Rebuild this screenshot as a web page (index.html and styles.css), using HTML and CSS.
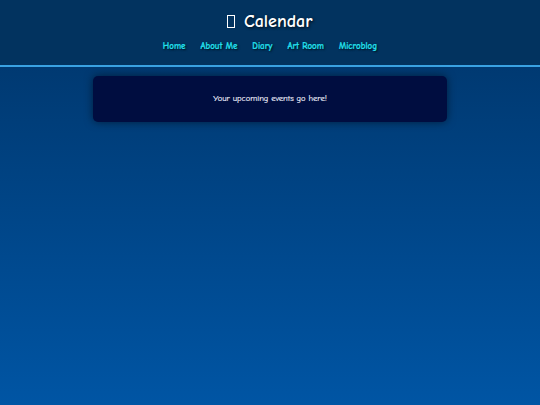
FILE: index.html
```html
<!DOCTYPE html>
<html lang="en">
<head>
<meta charset="utf-8">
<title>Calendar</title>
<link rel="stylesheet" href="styles.css">
</head>
<body>
<header class="site-header">
  <h1 class="title"><span class="tofu"></span> Calendar</h1>
  <nav class="nav">
    <a href="#">Home</a>
    <a href="#">About Me</a>
    <a href="#">Diary</a>
    <a href="#">Art Room</a>
    <a href="#">Microblog</a>
  </nav>
</header>
<main class="main">
  <section class="card">
    <p>Your upcoming events go here!</p>
  </section>
</main>
</body>
</html>
```

FILE: styles.css
```css
html, body {
  margin: 0;
  padding: 0;
  height: 100%;
}
body {
  font-family: "Comic Sans MS", "Comic Neue", "Lato", "DejaVu Sans", sans-serif;
  background: linear-gradient(to bottom, #003468 0%, #0055a4 100%);
  min-height: 405px;
  color: #dde0ff;
}
.site-header {
  background: #02335f;
  border-bottom: 2px solid #3aa2e2;
  height: 67px;
  box-sizing: border-box;
  padding-top: 11px;
  text-align: center;
}
.title {
  margin: 0;
  font-size: 18px;
  font-weight: bold;
  color: #ffffff;
  line-height: 22px;
  text-shadow: 1px 1px 3px rgba(0, 0, 0, 0.8);
}
.tofu {
  display: inline-block;
  width: 6px;
  height: 11px;
  border: 1px solid #ffffff;
  vertical-align: -1px;
  margin-right: 2px;
}
.nav {
  display: flex;
  justify-content: center;
  gap: 15px;
  margin-top: 7px;
}
.nav a {
  color: #22e0f0;
  text-decoration: none;
  font-size: 9px;
  font-weight: bold;
  line-height: 12px;
  -webkit-text-stroke: 0.2px #22e0f0;
  text-shadow: 1px 1px 2px rgba(0, 0, 0, 0.8);
}
.main {
  padding-top: 9px;
}
.card {
  width: 354px;
  height: 46px;
  margin: 0 auto;
  padding-bottom: 2px;
  box-sizing: border-box;
  background: #000d40;
  border-radius: 5px;
  box-shadow: 0 0 8px rgba(0, 0, 0, 0.5);
  display: flex;
  align-items: center;
  justify-content: center;
}
.card p {
  margin: 0;
  font-size: 8.5px;
  color: #f2f2ff;
  -webkit-text-stroke: 0.15px #f2f2ff;
}
```
